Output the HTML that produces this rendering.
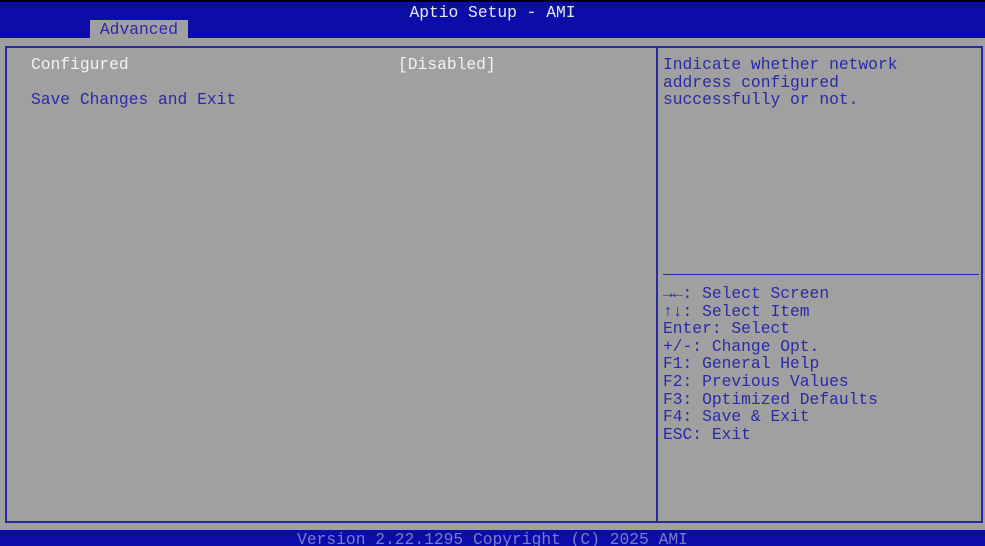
<!DOCTYPE html>
<html><head><meta charset="utf-8"><style>
html,body{margin:0;padding:0;width:985px;height:546px;overflow:hidden;background:#a0a0a0;}
body{position:relative;font-family:"Liberation Mono","DejaVu Sans Mono",monospace;font-size:16.3px;color:#2a2aa8;}
.top{position:absolute;left:0;top:0;width:985px;height:38px;background:#0c0ca8;border-top:2px solid #000;box-sizing:border-box;}
.title{position:absolute;left:0;width:985px;top:1px;text-align:center;color:#e8e8e8;}
.tab{position:absolute;left:90px;top:20px;width:98px;height:18px;background:#a0a0a0;color:#2a2aa8;text-align:center;line-height:19px;}
.box{position:absolute;left:5px;top:46px;width:978px;height:477px;box-sizing:border-box;border:2px solid #2a2aa0;}
.div{position:absolute;left:656px;top:46px;width:2px;height:477px;background:#2a2aa0;}
.hl{position:absolute;left:663px;top:274px;width:316px;height:1px;background:#2a2aa0;}
.t{position:absolute;white-space:pre;line-height:17.6px;}
.bot{position:absolute;left:0;top:530px;width:985px;height:16px;background:#0c0ca8;color:#7a7ad0;text-align:center;line-height:20px;}
</style></head><body>
<div class="top"><div class="title">Aptio Setup - AMI</div></div>
<div class="tab">Advanced</div>
<div class="box"></div>
<div class="div"></div>
<div class="hl"></div>
<div class="t" style="left:31px;top:56px;color:#f2f2f2">Configured</div>
<div class="t" style="left:398px;top:56px;color:#f2f2f2">[Disabled]</div>
<div class="t" style="left:31px;top:91px">Save Changes and Exit</div>
<div class="t" style="left:663px;top:56px">Indicate whether network
address configured
successfully or not.</div>
<div class="t" style="left:663px;top:285px"><b>→←</b>: Select Screen
<b>↑↓</b>: Select Item
Enter: Select
+/-: Change Opt.
F1: General Help
F2: Previous Values
F3: Optimized Defaults
F4: Save &amp; Exit
ESC: Exit</div>
<div class="bot">Version 2.22.1295 Copyright (C) 2025 AMI</div>
</body></html>
